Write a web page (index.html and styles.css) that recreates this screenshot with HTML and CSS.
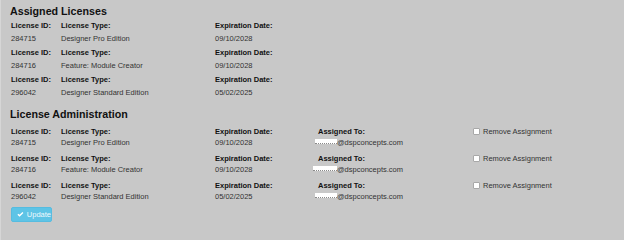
FILE: index.html
```html
<!DOCTYPE html>
<html lang="en">
<head>
    <meta charset="UTF-8">
    <meta name="viewport" content="width=device-width, initial-scale=1.0">
    <title>Licenses</title>
    <link rel="stylesheet" href="styles.css">
</head>
<body>
    <div class="page">
        <h2 class="section-title">Assigned Licenses</h2>

        <div class="license-row">
            <div class="col col-id"><div class="label">License ID:</div><div class="value">284715</div></div>
            <div class="col col-type"><div class="label">License Type:</div><div class="value">Designer Pro Edition</div></div>
            <div class="col col-exp"><div class="label">Expiration Date:</div><div class="value">09/10/2028</div></div>
        </div>
        <div class="license-row">
            <div class="col col-id"><div class="label">License ID:</div><div class="value">284716</div></div>
            <div class="col col-type"><div class="label">License Type:</div><div class="value">Feature: Module Creator</div></div>
            <div class="col col-exp"><div class="label">Expiration Date:</div><div class="value">09/10/2028</div></div>
        </div>
        <div class="license-row">
            <div class="col col-id"><div class="label">License ID:</div><div class="value">296042</div></div>
            <div class="col col-type"><div class="label">License Type:</div><div class="value">Designer Standard Edition</div></div>
            <div class="col col-exp"><div class="label">Expiration Date:</div><div class="value">05/02/2025</div></div>
        </div>

        <h2 class="section-title admin-title">License Administration</h2>

        <form class="admin-form">
            <div class="license-row">
                <div class="col col-id"><div class="label">License ID:</div><div class="value">284715</div></div>
                <div class="col col-type"><div class="label">License Type:</div><div class="value">Designer Pro Edition</div></div>
                <div class="col col-exp"><div class="label">Expiration Date:</div><div class="value">09/10/2028</div></div>
                <div class="col col-user"><div class="label">Assigned To:</div><div class="value email"><span class="redacted"></span>@dspconcepts.com</div></div>
                <label class="col col-remove"><input type="checkbox" class="remove-check"> Remove Assignment</label>
            </div>
            <div class="license-row">
                <div class="col col-id"><div class="label">License ID:</div><div class="value">284716</div></div>
                <div class="col col-type"><div class="label">License Type:</div><div class="value">Feature: Module Creator</div></div>
                <div class="col col-exp"><div class="label">Expiration Date:</div><div class="value">09/10/2028</div></div>
                <div class="col col-user"><div class="label">Assigned To:</div><div class="value email"><span class="redacted wide"></span>@dspconcepts.com</div></div>
                <label class="col col-remove"><input type="checkbox" class="remove-check"> Remove Assignment</label>
            </div>
            <div class="license-row">
                <div class="col col-id"><div class="label">License ID:</div><div class="value">296042</div></div>
                <div class="col col-type"><div class="label">License Type:</div><div class="value">Designer Standard Edition</div></div>
                <div class="col col-exp"><div class="label">Expiration Date:</div><div class="value">05/02/2025</div></div>
                <div class="col col-user"><div class="label">Assigned To:</div><div class="value email"><span class="redacted"></span>@dspconcepts.com</div></div>
                <label class="col col-remove"><input type="checkbox" class="remove-check"> Remove Assignment</label>
            </div>

            <button type="button" class="btn-update">
                <svg class="btn-icon" viewBox="0 0 10 8" width="8" height="7"><path d="M0.6 4.2 L2.2 2.8 L3.8 4.4 L8 0.4 L9.4 1.8 L3.8 7.2 Z" fill="#fff"/></svg>
                Update
            </button>
        </form>
    </div>
</body>
</html>
```

FILE: styles.css
```css
/* License page */

body {
    margin: 0;
    background: #c8c8c8;
    font-family: "Liberation Sans", Arial, sans-serif;
    color: #333;
}

.page {
    padding: 4px 10px 0 10px;
    border-left: 1px solid #d6d6d6;
    min-height: 236px;
}

.section-title {
    margin: 0 0 1px -1px;
    font-size: 10.7px;
    line-height: 14px;
    font-weight: bold;
    color: #111;
}

.admin-title {
    margin-top: 8px;
    margin-bottom: 5px;
}

/* Rows */
.license-row {
    display: flex;
    margin-bottom: 1px;
    font-size: 7.5px;
    line-height: 13px;
}

.admin-form .license-row {
    line-height: 11px;
    margin-bottom: 5px;
}

.col-id {
    width: 50px;
}

.col-type {
    width: 154px;
}

.col-exp {
    width: 103px;
}

.col-user {
    width: 155px;
}

.label {
    font-weight: bold;
    color: #111;
}

.value {
    color: #333;
}

.email {
    margin-left: -3px;
}

.redacted {
    display: inline-block;
    width: 22px;
    height: 4px;
    background: #fff;
    border-bottom: 1px dotted #8a8a8a;
    vertical-align: 1px;
}

.redacted.wide {
    width: 24px;
    margin-left: -2px;
}

/* Remove checkbox */
.col-remove {
    display: flex;
    align-items: flex-start;
    color: #333;
}

.remove-check {
    appearance: none;
    -webkit-appearance: none;
    width: 7px;
    height: 7px;
    margin: 2px 3px 0 0;
    background: #fff;
    border: 1px solid #a8a8a8;
    border-radius: 1px;
    box-sizing: border-box;
}

/* Button */
.btn-update {
    display: flex;
    align-items: center;
    gap: 3px;
    width: 41px;
    height: 15px;
    padding: 0 0 0 5px;
    background: #5ec4e6;
    border: 1px solid #56bce0;
    border-radius: 2px;
    color: #eef9fd;
    font-family: "Liberation Sans", Arial, sans-serif;
    font-size: 7.5px;
    cursor: pointer;
}

.btn-icon {
    display: block;
}
```
